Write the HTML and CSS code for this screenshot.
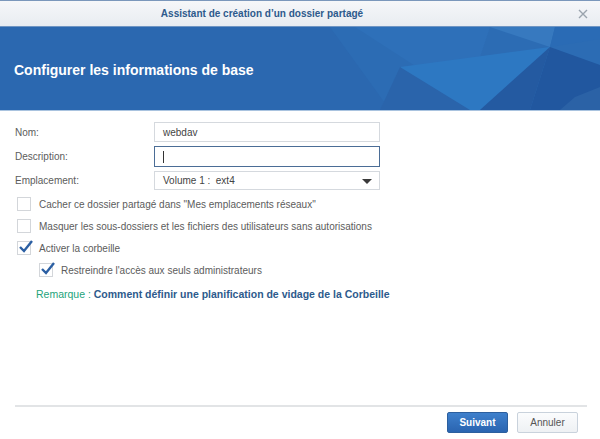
FILE: index.html
```html
<!doctype html>
<html>
<head>
    <meta charset="utf-8">
    <title>Assistant de création d'un dossier partagé</title>
    <link rel="stylesheet" href="styles.css">
</head>
<body>
    <div class="dialog">
        <div class="titlebar">
            <span class="title">Assistant de création d’un dossier partagé</span>
            <svg class="close" width="10" height="10" viewBox="0 0 10 10">
                <path d="M1 1L9 9M9 1L1 9" stroke="#9aa3ad" stroke-width="1.4"/>
            </svg>
        </div>
        <div class="banner">
            <svg class="facets" width="600" height="83" viewBox="0 0 600 83" preserveAspectRatio="none">
                <polygon points="330,0 600,0 600,83 390,83" fill="#2c6cb4"/>
                <polygon points="355,0 490,0 480,30 440,55" fill="#2e70b9"/>
                <polygon points="490,0 555,0 550,20" fill="#3779bf"/>
                <polygon points="555,0 600,0 600,12 550,20" fill="#2a6bb5"/>
                <polygon points="400,40 550,20 480,83 440,83" fill="#2d78c2"/>
                <polygon points="380,83 400,40 470,83" fill="#2a64ab"/>
                <polygon points="550,20 600,38 600,83 530,83" fill="#21579f"/>
                <polygon points="550,20 480,83 530,83" fill="#245aa1"/>
                <polygon points="575,70 600,60 600,83 560,83" fill="#2b62a6"/>
            </svg>
            <h1 class="heading">Configurer les informations de base</h1>
        </div>
        <div class="content">
            <div class="form">
                <label class="lbl">Nom:</label>
                <div class="field">webdav</div>
                <label class="lbl">Description:</label>
                <div class="field focused"><span class="caret"></span></div>
                <label class="lbl">Emplacement:</label>
                <div class="field select">Volume 1 :&nbsp; ext4<span class="arrow"></span></div>
            </div>
            <div class="checks">
                <div class="check"><span class="box"></span>Cacher ce dossier partagé dans "Mes emplacements réseaux"</div>
                <div class="check"><span class="box"></span>Masquer les sous-dossiers et les fichiers des utilisateurs sans autorisations</div>
                <div class="check"><span class="box on"><svg width="16" height="14" viewBox="0 0 16 14"><path d="M2 7L6 11L14 1" fill="none" stroke="#2b5fa3" stroke-width="2.4"/></svg></span>Activer la corbeille</div>
                <div class="check sub"><span class="box on"><svg width="16" height="14" viewBox="0 0 16 14"><path d="M2 7L6 11L14 1" fill="none" stroke="#2b5fa3" stroke-width="2.4"/></svg></span>Restreindre l'accès aux seuls administrateurs</div>
                <div class="note"><span class="note-k">Remarque : </span><a class="note-link">Comment définir une planification de vidage de la Corbeille</a></div>
            </div>
        </div>
        <div class="footer">
            <button class="btn primary">Suivant</button>
            <button class="btn">Annuler</button>
        </div>
    </div>
</body>
</html>
```
FILE: styles.css
```css
html, body {
    margin: 0;
    padding: 0;
    background: #fff;
}
.dialog {
    width: 600px;
    height: 439px;
    display: flex;
    flex-direction: column;
    font-family: "Liberation Sans", Arial, sans-serif;
    font-size: 10px;
    color: #5c5c5c;
    border-top: 1px solid #7b97bb;
    box-sizing: border-box;
}
.titlebar {
    height: 25px;
    display: flex;
    align-items: center;
    justify-content: center;
    position: relative;
    background: linear-gradient(#f6f7f9, #e8ecf1);
    border-bottom: 1px solid #6f95c3;
}
.title {
    font-weight: bold;
    color: #2d5a8c;
    font-size: 10px;
    margin-right: 76px;
}
.close {
    position: absolute;
    right: 12px;
    top: 8px;
}
.banner {
    height: 83px;
    position: relative;
    background: #2b68b0;
    display: flex;
    align-items: center;
    border-bottom: 1px solid #a9c3df;
    overflow: hidden;
}
.facets {
    position: absolute;
    left: 0;
    top: 0;
}
.heading {
    position: relative;
    margin: 0 0 0 14px;
    padding-top: 3px;
    color: #fff;
    font-size: 14px;
    font-weight: bold;
}
.content {
    flex: 1;
    padding: 11px 0 0 15px;
}
.form {
    display: grid;
    grid-template-columns: 139px 226px;
    row-gap: 4px;
    align-items: center;
}
.lbl {
    color: #5c5c5c;
}
.field {
    height: 18px;
    border: 1px solid #d5d9de;
    display: flex;
    align-items: center;
    padding: 0 8px;
    color: #444;
    position: relative;
}
.focused {
    border-color: #4b6d96;
    height: 19px;
}
.select {
    height: 17px;
}
.caret {
    width: 1px;
    height: 12px;
    background: #333;
}
.arrow {
    position: absolute;
    right: 7px;
    top: 7px;
    border-left: 5px solid transparent;
    border-right: 5px solid transparent;
    border-top: 5px solid #3a3a3a;
}
.checks {
    padding: 3px 0 0 2px;
}
.check {
    height: 22px;
    display: flex;
    align-items: center;
}
.sub {
    padding-left: 22px;
}
.box {
    width: 12px;
    height: 12px;
    border: 1px solid #d3d6da;
    margin-right: 8px;
    position: relative;
    background: #fff;
}
.box svg {
    position: absolute;
    left: 0;
    top: -2px;
}
.note {
    height: 26px;
    display: flex;
    align-items: center;
    padding-left: 19px;
    white-space: pre;
    font-size: 10.5px;
}
.note-k {
    color: #23a37a;
}
.note-link {
    color: #2d5a8c;
    font-weight: bold;
}
.footer {
    margin: 0 13px 0 15px;
    border-top: 2px solid #e2e4e6;
    height: 34px;
    display: flex;
    justify-content: flex-end;
    align-items: flex-start;
    padding: 5px 9px 0 0;
    gap: 9px;
    box-sizing: border-box;
}
.btn {
    width: 61px;
    height: 21px;
    font-family: "Liberation Sans", Arial, sans-serif;
    font-size: 10px;
    color: #555;
    background: linear-gradient(#fbfcfd, #eef1f4);
    border: 1px solid #c9d2dc;
    border-radius: 2px;
}
.primary {
    color: #fff;
    font-weight: bold;
    background: linear-gradient(#3e80cc, #2a64b0);
    border-color: #2c5f9e;
}
```
